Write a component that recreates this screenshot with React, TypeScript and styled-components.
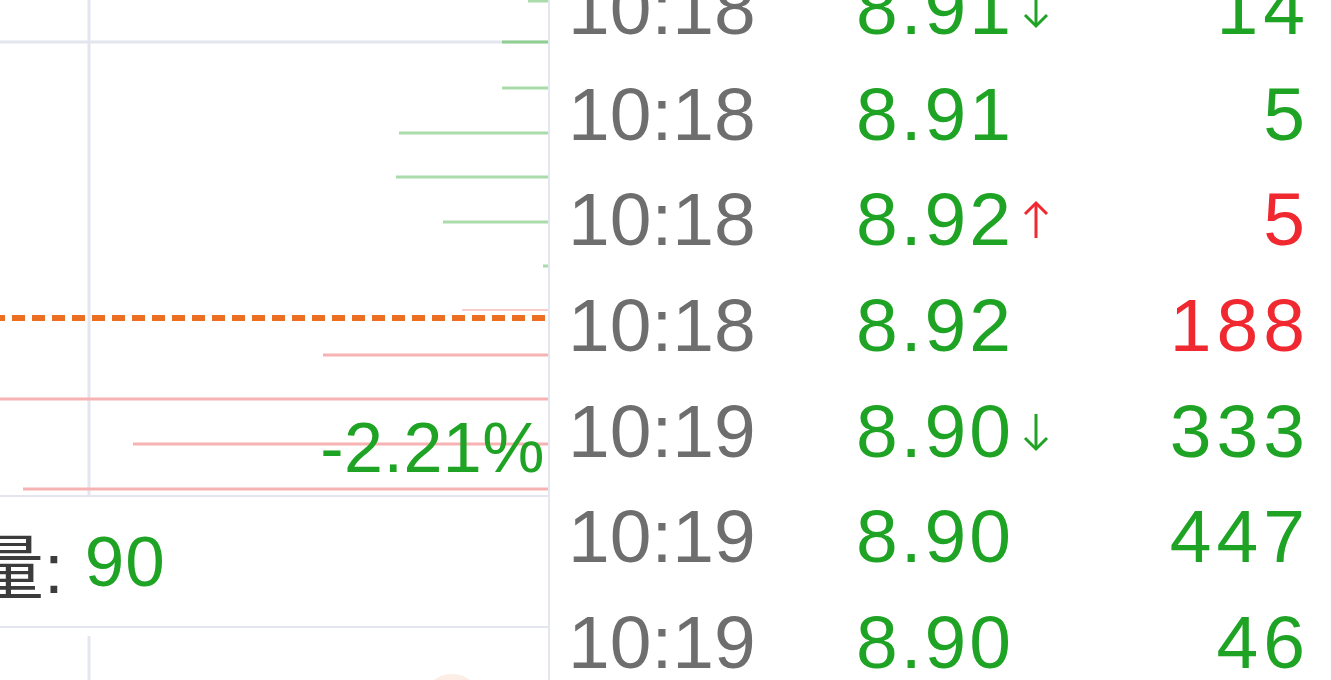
import { createGlobalStyle, styled } from "styled-components";

const GREEN = "#1fa324";
const RED = "#f0282f";
const GRID = "#e3e6ef";

const GlobalStyle = createGlobalStyle`
  html, body {
    margin: 0;
    padding: 0;
    background: #ffffff;
    overflow: hidden;
  }
  body {
    font-family: "Liberation Sans", Arial, "Noto Sans CJK SC", sans-serif;
  }
`;

const Page = styled.div`
  display: flex;
  width: 1331px;
  height: 680px;
  overflow: hidden;
  background: #fff;
`;

const LeftPanel = styled.div`
  width: 548px;
  flex: none;
  display: flex;
  flex-direction: column;
  border-right: 2px solid ${GRID};
`;

const ChartArea = styled.div`
  position: relative;
  height: 495px;
  flex: none;
  border-bottom: 2px solid ${GRID};
`;

const ChartSvg = styled.svg`
  display: block;
  width: 548px;
  height: 495px;
`;

const PercentLabel = styled.span`
  position: absolute;
  right: 3px;
  top: 413px;
  font-size: 70px;
  line-height: 70px;
  letter-spacing: 0.5px;
  color: ${GREEN};
`;

const VolumeBar = styled.div`
  height: 129px;
  flex: none;
  display: flex;
  align-items: center;
  border-bottom: 2px solid ${GRID};
  overflow: hidden;
  font-size: 71px;
  white-space: pre;
`;

const VolumeLabel = styled.span`
  margin-left: -27px;
  margin-right: 21px;
  color: #3c3c3c;
  font-family: "Liberation Sans", "Noto Sans CJK SC", sans-serif;
`;

const VolumeValue = styled.span`
  color: ${GREEN};
  letter-spacing: 1px;
`;

const SubChart = styled.div`
  flex: 1;
  overflow: hidden;
`;

const RightPanel = styled.div`
  flex: 1;
  overflow: hidden;
`;

const TradeList = styled.div`
  margin-top: -44px;
  padding: 0 21px 0 18px;
`;

const Row = styled.div`
  display: grid;
  grid-template-columns: 288px 220px 1fr;
  align-items: center;
  height: 105.7px;
  font-size: 75px;
  line-height: 105.7px;
`;

const Time = styled.span`
  color: #6e6e6e;
`;

const Price = styled.span`
  display: flex;
  align-items: center;
  color: ${GREEN};
  letter-spacing: 3px;
`;

const ArrowIcon = styled.svg`
  width: 30px;
  height: 40px;
  margin-left: 7px;
  flex: none;
`;

const Volume = styled.span<{ $up: boolean }>`
  text-align: right;
  letter-spacing: 5px;
  color: ${(p) => (p.$up ? RED : GREEN)};
`;

type Dir = "up" | "down" | null;

interface Trade {
  time: string;
  price: string;
  dir: Dir;
  vol: number;
  up: boolean;
}

const trades: Trade[] = [
  { time: "10:18", price: "8.91", dir: "down", vol: 14, up: false },
  { time: "10:18", price: "8.91", dir: null, vol: 5, up: false },
  { time: "10:18", price: "8.92", dir: "up", vol: 5, up: true },
  { time: "10:18", price: "8.92", dir: null, vol: 188, up: true },
  { time: "10:19", price: "8.90", dir: "down", vol: 333, up: false },
  { time: "10:19", price: "8.90", dir: null, vol: 447, up: false },
  { time: "10:19", price: "8.90", dir: null, vol: 46, up: false },
];

// depth bars: [y, x start]
const bidBars: [number, number][] = [
  [1, 528],
  [42, 502],
  [88, 502],
  [133, 399],
  [177, 396],
  [222, 443],
  [266, 543],
];

const askBars: [number, number][] = [
  [310, 462],
  [355, 323],
  [399, 0],
  [444, 133],
  [489, 23],
];

function Arrow({ dir }: { dir: "up" | "down" }) {
  const color = dir === "up" ? RED : GREEN;
  return (
    <ArrowIcon viewBox="0 0 30 40" fill="none" stroke={color} strokeWidth={3}>
      {dir === "up" ? (
        <>
          <line x1="15" y1="38" x2="15" y2="3" />
          <polyline points="4,14 15,3 26,14" />
        </>
      ) : (
        <>
          <line x1="15" y1="2" x2="15" y2="37" />
          <polyline points="4,26 15,37 26,26" />
        </>
      )}
    </ArrowIcon>
  );
}

function DepthChart() {
  return (
    <ChartSvg viewBox="0 0 548 495">
      <line x1="0" y1="42" x2="548" y2="42" stroke={GRID} strokeWidth={3} />
      <line x1="89" y1="0" x2="89" y2="495" stroke={GRID} strokeWidth={3} />
      {bidBars.map(([y, x]) => (
        <line
          key={`b${y}`}
          x1={x}
          y1={y}
          x2={548}
          y2={y}
          stroke={y === 42 ? "#8fcf8f" : "#a9dca9"}
          strokeWidth={3}
        />
      ))}
      {askBars.map(([y, x]) => (
        <line
          key={`a${y}`}
          x1={x}
          y1={y}
          x2={548}
          y2={y}
          stroke={y === 310 ? "#fbcaca" : "#f7b3b3"}
          strokeWidth={y === 310 ? 2 : 3}
        />
      ))}
      <line
        x1="0"
        y1="318"
        x2="548"
        y2="318"
        stroke="#ec6e22"
        strokeWidth={6}
        strokeDasharray="13 7"
        strokeDashoffset={8}
      />
    </ChartSvg>
  );
}

export default function App() {
  return (
    <>
      <GlobalStyle />
      <Page>
        <LeftPanel>
          <ChartArea>
            <DepthChart />
            <PercentLabel>-2.21%</PercentLabel>
          </ChartArea>
          <VolumeBar>
            <VolumeLabel>量:</VolumeLabel>
            <VolumeValue>90</VolumeValue>
          </VolumeBar>
          <SubChart>
            <svg width="548" height="52" viewBox="0 0 548 52">
              <line x1="89" y1="8" x2="89" y2="52" stroke={GRID} strokeWidth={3} />
              <circle cx="452" cy="76" r="30" fill="#fbd9c6" opacity={0.45} />
            </svg>
          </SubChart>
        </LeftPanel>
        <RightPanel>
          <TradeList>
            {trades.map((t, i) => (
              <Row key={i}>
                <Time>{t.time}</Time>
                <Price>
                  {t.price}
                  {t.dir && <Arrow dir={t.dir} />}
                </Price>
                <Volume $up={t.up}>{t.vol}</Volume>
              </Row>
            ))}
          </TradeList>
        </RightPanel>
      </Page>
    </>
  );
}
